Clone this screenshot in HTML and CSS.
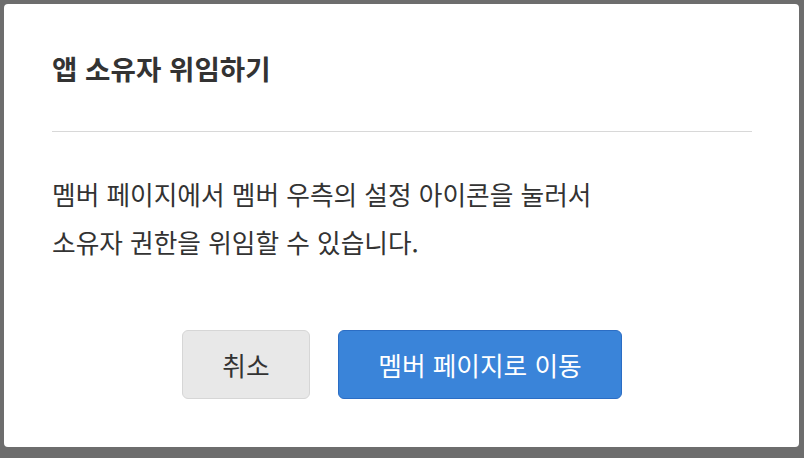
FILE: index.html
```html
<!DOCTYPE html>
<html lang="ko">
<head>
<meta charset="UTF-8">
<meta name="viewport" content="width=device-width, initial-scale=1.0">
<title>앱 소유자 위임하기</title>
<link rel="stylesheet" href="styles.css">
</head>
<body>

<div class="dialog">
    <h2 class="dialog-title">앱 소유자 위임하기</h2>
    <div class="dialog-body">
        <p>멤버 페이지에서 멤버 우측의 설정 아이콘을 눌러서<br>소유자 권한을 위임할 수 있습니다.</p>
    </div>
    <div class="dialog-actions">
        <button class="btn btn-cancel">취소</button>
        <button class="btn btn-primary">멤버 페이지로 이동</button>
    </div>
</div>

</body>
</html>
```

FILE: styles.css
```css
body {
    font-family: "Noto Sans CJK KR", "Noto Sans", sans-serif;
    background-color: #6d6d6d;
    margin: 0;
    padding: 4px 5px 11px 4px;
}
.dialog {
    height: 443px;
    box-sizing: border-box;
    background-color: #ffffff;
    border-radius: 4px;
    padding: 46px 47px 0 48px;
}
.dialog-title {
    margin: 0;
    padding-bottom: 45px;
    border-bottom: 1px solid #d8d8d8;
    font-size: 27.6px;
    line-height: 36px;
    font-weight: 700;
    color: #333333;
}
.dialog-body p {
    margin: 38px 0 0;
    font-size: 25.7px;
    line-height: 48px;
    color: #333333;
}
.dialog-actions {
    display: flex;
    justify-content: center;
    gap: 28px;
    margin-top: 64px;
}
.btn {
    height: 69px;
    box-sizing: border-box;
    border-radius: 6px;
    font-family: inherit;
    font-size: 25.7px;
    cursor: pointer;
}
.btn-cancel {
    width: 128px;
    background-color: #e8e8e8;
    border: 1px solid #d6d6d6;
    color: #333333;
}
.btn-primary {
    width: 284px;
    background-color: #3a84d9;
    border: 1px solid #2b6dc4;
    color: #ffffff;
}
```
